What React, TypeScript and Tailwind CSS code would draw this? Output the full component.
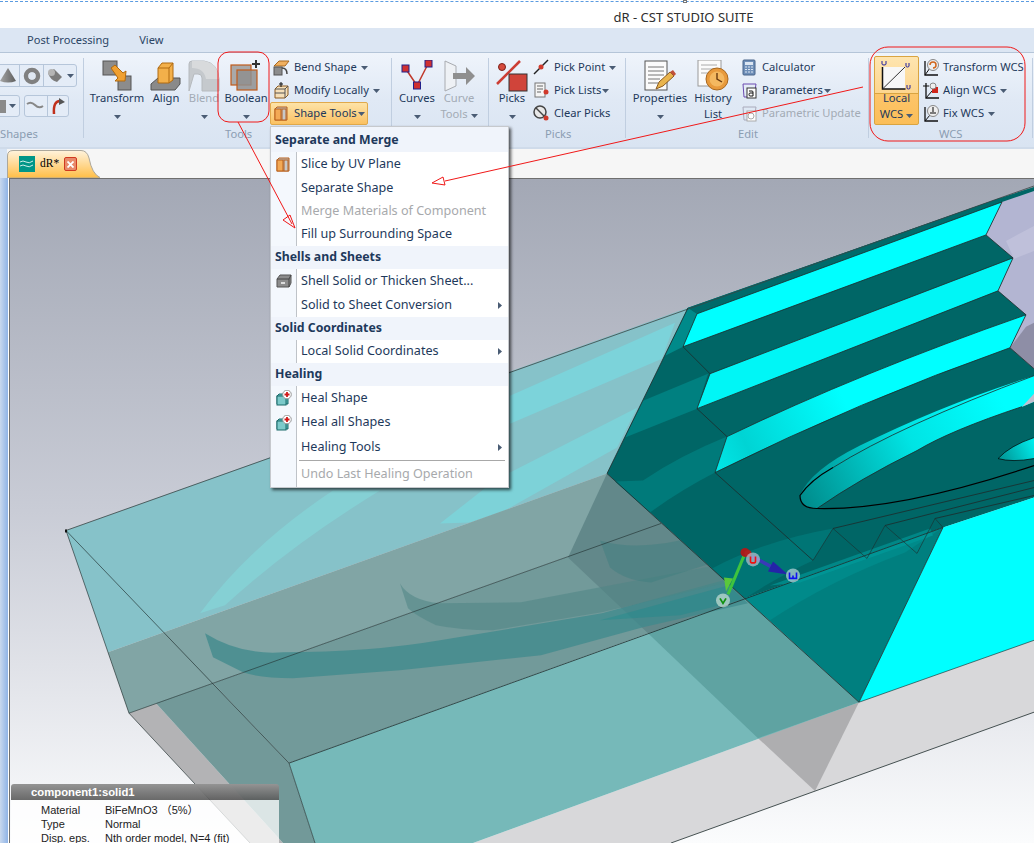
import type { ReactNode } from "react";

const uiFont = "font-['Noto_Sans',sans-serif]";

function Caret({ className = "" }: { className?: string }) {
  return (
    <svg width="7" height="4" viewBox="0 0 7 4" className={`shrink-0 ${className}`}>
      <path d="M0 0h7L3.5 4z" fill="#4a5c74" />
    </svg>
  );
}

function Ico({ children, size = 32 }: { children: ReactNode; size?: number }) {
  return (
    <svg width={size} height={size} viewBox={`0 0 ${size} ${size}`} className="shrink-0">
      {children}
    </svg>
  );
}

/* large ribbon icons */
const TransformIcon = () => (
  <Ico>
    <rect x="2" y="1" width="14" height="14" fill="#8c8c8c" stroke="#555" />
    <rect x="17" y="16" width="13" height="14" fill="#8c8c8c" stroke="#555" />
    <path d="M10 8l4-3 8 8 3-2-1 10-10 0 3-3-7-10z" fill="#f0a030" stroke="#b06a10" />
  </Ico>
);
const AlignIcon = () => (
  <Ico>
    <path d="M1 30v-6l7-6h22v6l-5 6z" fill="#8a8a8a" stroke="#555" />
    <path d="M8 8l4-5h11v17l-4 3H8z" fill="#f3b04a" stroke="#b06a10" />
    <path d="M8 8h11v15M19 8l4-5" fill="none" stroke="#b06a10" />
  </Ico>
);
const BlendIcon = () => (
  <Ico>
    <path d="M1 31V4q0-3 3-3h12q14 2 15 18v12H14V18q0-4-4-4H6z" fill="#c5c9cd" stroke="#b6babe" />
    <path d="M4 1h12q14 2 15 18H18Q16 8 4 8z" fill="#d8dadc" />
  </Ico>
);
const BooleanIcon = () => (
  <Ico>
    <rect x="1" y="5" width="20" height="20" fill="#a9a9a9" stroke="#c05a1a" strokeWidth="1.2" />
    <rect x="7" y="10" width="20" height="20" fill="#8f8f8f" fillOpacity="0.85" stroke="#c05a1a" strokeWidth="1.2" />
    <path d="M26 0v8M22 4h8" stroke="#333" strokeWidth="2" />
  </Ico>
);
const CurvesIcon = () => (
  <Ico>
    <path d="M4.500 8.500L16 25.500L27 4" fill="none" stroke="#c0392b" strokeWidth="1.5" />
    <rect x="1" y="5" width="7" height="7" fill="#d03030" stroke="#20208a" />
    <rect x="24" y="0" width="7" height="7" fill="#d03030" stroke="#20208a" />
    <rect x="12.500" y="22" width="7" height="7" fill="#d03030" stroke="#20208a" />
  </Ico>
);
const CurveToolsIcon = () => (
  <Ico>
    <path d="M2 1l11 5v20L2 31z" fill="#eef1f5" stroke="#a8abb0" />
    <path d="M10 13h13V7l9 9-9 9v-6H10z" fill="#8f8f8f" />
  </Ico>
);
const PicksIcon = () => (
  <Ico>
    <path d="M1 24L24 1" stroke="#cc3d33" strokeWidth="2.5" />
    <circle cx="6" cy="7" r="3.5" fill="#d64a3c" stroke="#7a2018" />
    <rect x="13" y="14" width="18" height="17" fill="#d0443a" stroke="#333" />
  </Ico>
);
const PropertiesIcon = () => (
  <Ico>
    <rect x="1" y="1" width="22" height="29" fill="#fbfbfb" stroke="#555" />
    <path d="M4 7h16M4 11h16M4 15h16M4 19h12M4 23h10" stroke="#777" />
    <path d="M12 29l3-7 11-10 4 4-11 10z" fill="#e9b44c" stroke="#8a5a20" />
    <path d="M26 12l4 4 2-2-3-4z" fill="#c0503a" />
  </Ico>
);
const HistoryIcon = () => (
  <Ico>
    <rect x="1" y="0" width="23" height="26" fill="#fbfbfb" stroke="#9a9a9a" />
    <path d="M4 5h16M4 9h16M4 13h8" stroke="#aaa" />
    <circle cx="20" cy="19" r="11" fill="#e89a3c" stroke="#a86820" />
    <circle cx="20" cy="19" r="7.5" fill="#f4b860" />
    <path d="M20 13v6l5 3" fill="none" stroke="#6a3a10" strokeWidth="1.4" />
  </Ico>
);
const WcsIcon = () => (
  <Ico>
    <rect x="1" y="7" width="23" height="22" fill="#f7f7f7" />
    <path d="M1.500 7v22h23" fill="none" stroke="#111" strokeWidth="1.5" />
    <path d="M1.500 29L24 7" stroke="#333" />
    <path d="M1 1v3q0 1 2 1t2-1V1M25 3v3q0 1 1.500 1t1.500-1V3M26 25v3q0 1 1.500 1t1.500-1v-3" fill="none" stroke="#2020a0" />
  </Ico>
);

/* small ribbon icons */
const BendIcon = () => (
  <Ico size={17}>
    <path d="M1 7l5-5h10l-4 5z" fill="#f0b060" stroke="#a86820" />
    <rect x="1" y="8" width="8" height="8" fill="#8c8c8c" stroke="#555" />
    <path d="M9 9q5 0 5 6" fill="none" stroke="#444" strokeWidth="1.500" />
  </Ico>
);
const ModifyIcon = () => (
  <Ico size={17}>
    <path d="M2 7l3-3h10v9l-3 3H2z" fill="#f5dfb8" stroke="#8a5a20" />
    <path d="M2 7h10v9M12 7l3-3M2 11h10" fill="none" stroke="#555" />
    <path d="M8 0v5M6 2h4" stroke="#111" />
  </Ico>
);
const SliceIcon = () => (
  <Ico size={17}>
    <path d="M2 4l2-2h10v13H2z" fill="#bdbdbd" stroke="#b9611c" />
    <rect x="2" y="4" width="6" height="11" fill="#f3a955" stroke="#b9611c" />
    <rect x="9" y="4" width="4" height="11" fill="#c8c8c8" stroke="#b9611c" />
  </Ico>
);
const PickPointIcon = () => (
  <Ico size={17}>
    <path d="M1 15L15 1" stroke="#222" strokeWidth="1.400" />
    <circle cx="8" cy="8" r="2.500" fill="#d0392b" />
  </Ico>
);
const PickListIcon = () => (
  <Ico size={17}>
    <rect x="2" y="1" width="10" height="14" fill="#f5f5f5" stroke="#777" />
    <path d="M4 4h6M4 7h6M4 10h4" stroke="#666" />
    <circle cx="13" cy="10" r="2.500" fill="#d0392b" />
  </Ico>
);
const ClearPicksIcon = () => (
  <Ico size={17}>
    <circle cx="7" cy="7" r="6" fill="#e8e8e8" stroke="#444" strokeWidth="1.500" />
    <path d="M3 3l8 8" stroke="#444" strokeWidth="1.500" />
    <circle cx="13" cy="13" r="2.500" fill="#d0392b" />
  </Ico>
);
const CalculatorIcon = () => (
  <Ico size={17}>
    <rect x="2" y="1" width="12" height="15" rx="1" fill="#6f8fb8" stroke="#49648a" />
    <rect x="4" y="3" width="8" height="3" fill="#dce6f2" />
    <path d="M4 8h8M4 10.500h8M4 13h8" stroke="#dce6f2" strokeDasharray="2 1" />
  </Ico>
);
const ParametersIcon = ({ muted = false }: { muted?: boolean }) => (
  <Ico size={17}>
    <path d="M2 2h13L13 15H3z" fill="none" stroke={muted ? "#aab" : "#6a4ab0"} />
    <rect x="6" y="6" width="9" height="10" fill="#fff" stroke={muted ? "#aaa" : "#333"} />
    {muted ? (
      <circle cx="10" cy="11" r="3" fill="none" stroke="#aaa" />
    ) : (
      <path d="M8 9h3q1 0 1 1v4H9q-1 0-1-1.500T9 11h3" fill="none" stroke="#111" />
    )}
  </Ico>
);
const TransformWcsIcon = () => (
  <Ico size={18}>
    <path d="M3 2v14h13" fill="none" stroke="#111" strokeWidth="1.300" />
    <path d="M3 16L8 9" stroke="#111" />
    <circle cx="11" cy="6" r="5.500" fill="#eee" stroke="#888" />
    <path d="M8 6a3 3 0 1 1 3 3" fill="none" stroke="#d0661c" strokeWidth="1.500" />
  </Ico>
);
const AlignWcsIcon = () => (
  <Ico size={18}>
    <path d="M4 1v15h13" fill="none" stroke="#111" strokeWidth="1.300" />
    <path d="M4 16L10 9M1 4h6" stroke="#111" />
    <rect x="10" y="5" width="6" height="6" fill="#d0261c" />
    <circle cx="11" cy="4" r="3" fill="#eee" stroke="#888" />
  </Ico>
);
const FixWcsIcon = () => (
  <Ico size={18}>
    <path d="M3 2v14h13" fill="none" stroke="#111" strokeWidth="1.300" />
    <path d="M3 16L8 10" stroke="#111" />
    <circle cx="11" cy="6" r="5.500" fill="#eee" stroke="#888" />
    <path d="M11 2v5M8 8h6" stroke="#555" strokeWidth="1.500" />
  </Ico>
);

function Separator() {
  return <div className="mt-[5px] h-[80px] w-px shrink-0 bg-[#c0cee0]" />;
}

function Group({ width, label, align = "text-center", children }: { width: string; label: string; align?: string; children: ReactNode }) {
  return (
    <div className={`flex shrink-0 flex-col overflow-hidden ${width}`}>
      <div className="flex h-[73px] shrink-0 pt-[3px]">{children}</div>
      <div className={`whitespace-nowrap text-[11.2px] leading-[16px] text-[#8b9db2] ${align}`}>{label}</div>
    </div>
  );
}

function LargeButton({ width, icon, lines, muted = false, caret = true, active = false }: { width: string; icon: ReactNode; lines: string[]; muted?: boolean; caret?: boolean; active?: boolean }) {
  return (
    <div
      className={`flex h-[69px] shrink-0 flex-col items-center text-[11.2px] leading-[16px] ${width} ${muted ? "text-[#a3abb5]" : "text-[#1e395b]"} ${active ? "rounded-[2px] border border-[#d9a441] bg-[linear-gradient(#fee5b0_0%,#fdd68f_53%,#d9a441_53%,#d9a441_54.5%,#fdc56a_55%,#fbbe58_100%)] pt-[3px]" : "pt-[4px]"}`}
    >
      <div className="flex h-[30px] items-start justify-center">{icon}</div>
      <div className="whitespace-nowrap">{lines[0]}</div>
      {lines[1] ? (
        <div className="flex items-center gap-[3px] whitespace-nowrap">
          {lines[1]}
          {caret && <Caret className="mt-[3px]" />}
        </div>
      ) : (
        caret && <Caret className="mt-[9px]" />
      )}
    </div>
  );
}

function SmallItem({ icon, text, caret, muted = false, active = false }: { icon: ReactNode; text: string; caret?: "gap" | "tight"; muted?: boolean; active?: boolean }) {
  return (
    <div
      className={`flex h-[23px] items-center gap-[4px] self-start whitespace-nowrap pr-[2px] text-[11.2px] ${muted ? "text-[#a3abb5]" : "text-[#1e395b]"} ${active ? "rounded-[2px] border border-[#e0a94c] bg-gradient-to-b from-[#fde3a7] to-[#fbc161] pl-[2px]" : "pl-[3px]"}`}
    >
      <span className="flex w-[17px] justify-center">{icon}</span>
      <span>{text}</span>
      {caret === "gap" && <Caret className="mt-[1px]" />}
      {caret === "tight" && <Caret className="-ml-[3px] mt-[1px]" />}
    </div>
  );
}

function MiniTool({ children, className = "" }: { children: ReactNode; className?: string }) {
  return <div className={`flex items-center rounded-[3px] border border-[#b6c6da] bg-[#e4ecf7] ${className}`}>{children}</div>;
}

function Ribbon() {
  return (
    <div className={`flex h-[97px] shrink-0 border-b-2 border-t border-b-[#cfdbea] border-t-[#b5c5d8] bg-gradient-to-b from-[#eff4fb] via-[#e0e9f5] to-[#d9e4f2] ${uiFont}`}>
      <Group width="w-[83px]" label="Shapes" align="text-left">
        <div className="flex flex-col gap-[8px] pt-[8px]">
          <MiniTool className="-ml-[3px] h-[23px] w-[80px] justify-around pr-[1px]">
            <svg width="18" height="17" viewBox="0 0 18 17">
              <defs>
                <linearGradient id="coneG" x1="0" x2="1" y1="0" y2="0">
                  <stop offset="0" stopColor="#a5a5a5" />
                  <stop offset="1" stopColor="#5e5e5e" />
                </linearGradient>
              </defs>
              <path d="M9 1l8 13q-8 3-16 0z" fill="url(#coneG)" />
            </svg>
            <span className="h-full w-px bg-[#b6c6da]" />
            <svg width="18" height="18" viewBox="0 0 18 18"><circle cx="9" cy="9" r="6" fill="none" stroke="#808080" strokeWidth="4.500" /><circle cx="9" cy="9" r="3.400" fill="#dfe7f2" /></svg>
            <span className="h-full w-px bg-[#b6c6da]" />
            <svg width="18" height="17" viewBox="0 0 18 17"><path d="M2 6l6-4 8 8-5 5q-7-2-9-9z" fill="#7c7c7c" /><ellipse cx="5.500" cy="5.500" rx="3.500" ry="3.500" fill="#b5b5b5" /></svg>
            <Caret />
          </MiniTool>
          <div className="flex gap-[4px]">
            <MiniTool className="-ml-[5px] h-[22px] w-[25px] justify-end gap-[3px] pr-[3px]">
              <span className="h-[13px] w-[11px] bg-[#8a8a8a]" />
              <Caret />
            </MiniTool>
            <MiniTool className="h-[22px] w-[45px] justify-around">
              <svg width="18" height="10" viewBox="0 0 18 10"><path d="M1 3q4-3 8 1t8 1" fill="none" stroke="#888" strokeWidth="2" /></svg>
              <span className="h-full w-px bg-[#b6c6da]" />
              <svg width="16" height="17" viewBox="0 0 16 17"><path d="M3 16q-1-13 6-13" fill="none" stroke="#c0301c" strokeWidth="2.500" /><path d="M8 0l6 4-6 3z" fill="#555" /></svg>
            </MiniTool>
          </div>
        </div>
      </Group>
      <Separator />
      <Group width="w-[307px]" label="Tools" align="text-left pl-[141px]">
        <div className="flex pl-[7px]">
          <LargeButton width="w-[52px]" icon={<TransformIcon />} lines={["Transform"]} />
          <div className="w-[6px]" />
          <LargeButton width="w-[34px]" icon={<AlignIcon />} lines={["Align"]} caret={false} />
          <div className="w-[4px]" />
          <LargeButton width="w-[34px]" icon={<BlendIcon />} lines={["Blend"]} muted />
          <div className="w-[4px]" />
          <LargeButton width="w-[42px]" icon={<BooleanIcon />} lines={["Boolean"]} />
          <div className="flex flex-col pl-[3px]">
            <SmallItem icon={<BendIcon />} text="Bend Shape" caret="gap" />
            <SmallItem icon={<ModifyIcon />} text="Modify Locally" caret="gap" />
            <SmallItem icon={<SliceIcon />} text="Shape Tools" caret="tight" active />
          </div>
        </div>
      </Group>
      <Separator />
      <Group width="w-[96px]" label="">
        <div className="flex pl-[6px]">
          <LargeButton width="w-[38px]" icon={<CurvesIcon />} lines={["Curves"]} />
          <div className="w-[4px]" />
          <LargeButton width="w-[38px]" icon={<CurveToolsIcon />} lines={["Curve", "Tools"]} muted />
        </div>
      </Group>
      <Separator />
      <Group width="w-[136px]" label="Picks" align="text-left pl-[56px]">
        <div className="flex pl-[6px]">
          <LargeButton width="w-[34px]" icon={<PicksIcon />} lines={["Picks"]} />
          <div className="flex flex-col pl-[1px]">
            <SmallItem icon={<PickPointIcon />} text="Pick Point" caret="gap" />
            <SmallItem icon={<PickListIcon />} text="Pick Lists" caret="tight" />
            <SmallItem icon={<ClearPicksIcon />} text="Clear Picks" />
          </div>
        </div>
      </Group>
      <Separator />
      <Group width="w-[242px]" label="Edit" align="text-left pl-[112px]">
        <div className="flex pl-[6px]">
          <LargeButton width="w-[56px]" icon={<PropertiesIcon />} lines={["Properties"]} />
          <LargeButton width="w-[50px]" icon={<HistoryIcon />} lines={["History", "List"]} caret={false} />
          <div className="flex flex-col">
            <SmallItem icon={<CalculatorIcon />} text="Calculator" />
            <SmallItem icon={<ParametersIcon />} text="Parameters" caret="tight" />
            <SmallItem icon={<ParametersIcon muted />} text="Parametric Update" muted />
          </div>
        </div>
      </Group>
      <Separator />
      <Group width="w-[163px]" label="WCS" align="text-left pl-[70px]">
        <div className="flex pl-[5px]">
          <LargeButton width="w-[45px]" icon={<WcsIcon />} lines={["Local", "WCS"]} active />
          <div className="flex flex-col">
            <SmallItem icon={<TransformWcsIcon />} text="Transform WCS" />
            <SmallItem icon={<AlignWcsIcon />} text="Align WCS" caret="gap" />
            <SmallItem icon={<FixWcsIcon />} text="Fix WCS" caret="gap" />
          </div>
        </div>
      </Group>
      <Separator />
    </div>
  );
}

function MenuHeader({ text, height }: { text: string; height: string }) {
  return <div className={`flex items-center bg-[#f0f4fb] pl-[4px] text-[12.3px] font-bold text-[#1e395b] ${height}`}>{text}</div>;
}

function MenuItem({ text, height, icon, muted = false, sub = false }: { text: string; height: string; icon?: ReactNode; muted?: boolean; sub?: boolean }) {
  return (
    <div className={`flex ${height}`}>
      <div className="flex w-[26px] shrink-0 items-center justify-center border-r border-[#bfc3c8] bg-[#f4f8fd]">{icon}</div>
      <div className={`flex flex-1 items-center justify-between pl-[4px] pr-[6px] text-[12.6px] ${muted ? "text-[#a7a9ac]" : "text-[#1e395b]"}`}>
        <span>{text}</span>
        {sub && <svg width="4" height="7" viewBox="0 0 4 7"><path d="M0 0l4 3.500L0 7z" fill="#4a5c74" /></svg>}
      </div>
    </div>
  );
}

const ShellIcon = () => (
  <Ico size={16}>
    <path d="M1 6l3-4h11v8l-2 4H1z" fill="#8c8c8c" stroke="#555" />
    <path d="M1 6h12v8M13 6l2-4" fill="none" stroke="#444" />
    <rect x="5" y="9" width="4" height="2" fill="#ddd" />
  </Ico>
);
const HealIcon = () => (
  <Ico size={16}>
    <path d="M1 6l2-2h9v10H1z" fill="#58b4b4" stroke="#1a6a6a" />
    <rect x="1" y="6" width="9" height="9" fill="#7ccaca" stroke="#1a6a6a" />
    <circle cx="11" cy="4.500" r="4.300" fill="#fff" stroke="#999" />
    <path d="M11 2v5M8.500 4.500h5" stroke="#d01818" strokeWidth="1.800" />
  </Ico>
);

function ShapeToolsMenu() {
  return (
    <div className={`absolute left-[270px] top-[126px] z-10 w-[239px] border border-[#c6c9cd] bg-white shadow-[2px_2px_3px_rgba(0,0,0,0.65)] ${uiFont}`}>
      <MenuHeader text="Separate and Merge" height="h-[25px] pt-[2px]" />
      <MenuItem text="Slice by UV Plane" height="h-[24px]" icon={<SliceIcon />} />
      <MenuItem text="Separate Shape" height="h-[24px]" />
      <MenuItem text="Merge Materials of Component" height="h-[23px]" muted />
      <MenuItem text="Fill up Surrounding Space" height="h-[23px]" />
      <MenuHeader text="Shells and Sheets" height="h-[23px]" />
      <MenuItem text="Shell Solid or Thicken Sheet..." height="h-[24px]" icon={<ShellIcon />} />
      <MenuItem text="Solid to Sheet Conversion" height="h-[24px]" sub />
      <MenuHeader text="Solid Coordinates" height="h-[23px]" />
      <MenuItem text="Local Solid Coordinates" height="h-[23px]" sub />
      <MenuHeader text="Healing" height="h-[23px]" />
      <MenuItem text="Heal Shape" height="h-[24px]" icon={<HealIcon />} />
      <MenuItem text="Heal all Shapes" height="h-[25px]" icon={<HealIcon />} />
      <MenuItem text="Healing Tools" height="h-[24px]" sub />
      <div className="flex h-[3px]">
        <div className="w-[26px] shrink-0 border-r border-[#bfc3c8] bg-[#f4f8fd]" />
        <div className="ml-[2px] mr-[3px] mt-px h-px flex-1 bg-[#a8a8a8]" />
      </div>
      <MenuItem text="Undo Last Healing Operation" height="h-[25px]" muted />
    </div>
  );
}

function P({ pts, fill, opacity }: { pts: string; fill: string; opacity?: number }) {
  return <polygon points={pts} fill={fill} opacity={opacity} />;
}

function Scene() {
  const edge = "#1d2b2b";
  return (
    <svg viewBox="10 178 1024 665" className="block h-full w-full" preserveAspectRatio="none">
      <defs>
        <linearGradient id="cy1" x1="800" y1="495" x2="1000" y2="395" gradientUnits="userSpaceOnUse">
          <stop offset="0" stopColor="#008c8c" />
          <stop offset="0.55" stopColor="#00e4e4" />
          <stop offset="1" stopColor="#00ffff" />
        </linearGradient>
        <linearGradient id="cy3" x1="715" y1="470" x2="1010" y2="330" gradientUnits="userSpaceOnUse">
          <stop offset="0" stopColor="#00e8e8" />
          <stop offset="0.12" stopColor="#00d4d4" />
          <stop offset="0.45" stopColor="#00ffff" />
        </linearGradient>
        <linearGradient id="cy5" x1="998" y1="458" x2="1034" y2="440" gradientUnits="userSpaceOnUse">
          <stop offset="0" stopColor="#009090" />
          <stop offset="1" stopColor="#00eeee" />
        </linearGradient>
      </defs>

      {/* grey substrate */}
      <P pts="859,702 1034,640 1034,712 671,843 473,843" fill="#d8d8da" />
      <P pts="859,702 815,791 758,738" fill="#aeaeb0" />
      <P pts="108,652 156,703 129,713" fill="#d3d3d6" />
      <P pts="129,713 156,703 283,843 250,843" fill="#b3b3b5" />

      {/* translucent top face */}
      <P pts="66,530 688,307 607,473 108,652" fill="#86c2c9" />
      <P pts="510,395 675,322 662,358 510,423" fill="#7cd3da" />
      <P pts="510,472 637,407 617,447 505,510 470,522 440,523 505,472" fill="#7dd2d8" />
      <path d="M200 613 Q 250 545 333 490 L 380 490 Q 290 545 225 605 Z" fill="#85d0d4" />

      {/* grey-teal middle and its lower parts */}
      <P pts="108,652 607,473 661,523 129,713" fill="#81a5a5" />
      <P pts="156,703 213,683 289,763 315,843 283,843" fill="#729999" />
      <P pts="213,683 661,523 745,598 289,763" fill="#729a9a" />
      <P pts="289,763 745,598 859,702 473,843 315,843" fill="#76b9b9" />
      <P pts="648,633 745,598 859,702 758,738" fill="#5fa3a2" />
      <P pts="607,473 568,557 648,633 745,598" fill="#62888a" />

      {/* arcs seen through the body */}
      <path d="M205 633 Q 240 655 283 652 Q 370 652 440 640 L 602 613 L 723 580 L 748 603 L 643 627 L 541 655 L 400 670 L 293 678 Q 260 678 243 672 L 213 657 Z" fill="#3f8a8c" opacity="0.75" />
      <path d="M400 583 Q 410 600 440 603 L 521 602 L 715 565 L 735 580 L 602 612 L 493 630 Q 460 630 436 625 Q 415 615 408 608 Z" fill="#4f8585" opacity="0.55" />
      <path d="M600 540 L 610 567 Q 625 580 651 582 L 720 560 L 700 535 Q 640 552 600 540 Z" fill="#3f7f7f" opacity="0.45" />
      <path d="M600 620 L 820 560 L 930 525 L 930 535 L 800 585 L 680 615 Z" fill="#008b8b" opacity="0.25" />

      {/* solid dark body */}
      <P pts="688,307 1000,197 1034,186 1034,497 943,527 745,598 607,473" fill="#006666" />
      <P pts="745,598 859,702 943,527" fill="#007f7f" />
      <path d="M745 598 L 943 527 L 905 552 Q 830 580 770 620 Z" fill="#008a8a" />
      <path d="M770 585 L 930 528 L 933 535 L 800 582 Z" fill="#009c9c" opacity="0.6" />
      <P pts="688,307 697,313 683,346 665,355" fill="#008a8a" />
      <P pts="643,400 708,373 697,408 625,437" fill="#008080" />
      <path d="M727 436 Q 680 455 643 480 L 615 481 L 650 512 Q 680 490 715 472 Z" fill="#007a7a" />
      <path d="M712 568 Q 765 540 833 528 L 813 560 Q 780 575 745 598 Z" fill="#007575" />

      {/* steps */}
      <P pts="688,307 1000,197 1002,201 697,313" fill="#006a6a" />
      <P pts="697,313 1002,201 986,234 683,346" fill="#00ffff" />
      <P pts="710,373 1013,257 998,290 697,408" fill="#00f6f6" />
      <path d="M727 436 Q 860 372 1026 314 L 1010 347 Q 860 400 715 472 Z" fill="url(#cy3)" />
      <path d="M800 495 Q 810 470 860 445 Q 940 405 1034 375 L 1034 401 L 1022 406 Q 950 430 917 450 Q 860 478 817 508 Q 800 508 800 495 Z" fill="url(#cy1)" />
      <path d="M998 458 Q 1010 445 1034 437 L 1034 458 Q 1012 462 998 458 Z" fill="url(#cy5)" />

      {/* lavender back side of the steps */}
      <P pts="1002,201 1034,190 1034,368 1010,347 1026,314 998,290 1013,257 986,234" fill="#b3b5d2" />
      <P pts="1006,240 1034,225 1034,250 1014,258" fill="#bfc0da" />
      <P pts="1010,347 1026,326 1034,322 1034,368" fill="#8e8ea6" />
      <P pts="1022,406 1034,393 1034,401" fill="#c0c0d0" />

      {/* front cyan face */}
      <P pts="859,702 943,527 1034,497 1034,640" fill="#00ffff" />

      {/* edges */}
      <g fill="none" stroke={edge} strokeWidth="0.8">
        <path d="M66 530L1000 197M1000 197L1034 185" stroke="#3a4444" />
        <path d="M66 530L129 713L250 843" strokeOpacity="0.8" />
        <path d="M66 530L289 763L315 843" strokeOpacity="0.8" />
        <path d="M129 713L661 523" strokeOpacity="0.75" />
        <path d="M289 763L943 527" />
        <path d="M671 843L1034 712" />
        <path d="M859 702L1034 640" strokeOpacity="0.8" />
        <path d="M688 307L607 473L859 702L943 527" />
        <path d="M697 313L1002 201L986 234L683 346L697 313M683 346L710 373L697 408L727 436L715 472L813 560" />
        <path d="M986 234L1013 257L998 290L1026 314L1010 347L1034 368" />
        <path d="M710 373L1013 257M697 408L998 290M727 436Q860 372 1026 314M715 472Q860 400 1010 347" />
        <path d="M813 560L833 528L867 558L885 525L917 553L935 518L943 527" strokeWidth="0.6" />
        <path d="M833 528L1034 480M885 525L1034 487M935 518L1034 495" strokeWidth="0.8" />
        <path d="M833 467Q900 425 1034 375M817 508Q860 478 917 450Q950 430 1022 406" />
      </g>
      <path d="M833 467Q810 480 800 495Q800 508 817 508Q900 510 1034 465" fill="none" stroke="#000" strokeWidth="1.200" />
      <path d="M998 458Q1010 445 1034 437M998 458Q1012 462 1034 458" fill="none" stroke="#000" strokeWidth="0.7" />
      <rect x="65" y="529" width="2" height="3" fill="#111" />

      {/* local wcs triad */}
      <path d="M745 553L728 594" stroke="#3ec43e" strokeWidth="3" />
      <path d="M733 578L726 591L724 577z" fill="#5ac83a" />
      <path d="M752 556L782 572" stroke="#3a3ab8" strokeWidth="3.500" />
      <path d="M773 561L788 574L768 571z" fill="#2424a8" />
      <circle cx="745" cy="552" r="4.500" fill="#a81c1c" />
      <circle cx="748" cy="553" r="3.500" fill="#b02020" />
      <circle cx="753" cy="559" r="7" fill="#c8c8d8" opacity="0.65" />
      <circle cx="793" cy="575" r="7" fill="#b0d0d8" opacity="0.75" />
      <circle cx="723" cy="600" r="7" fill="#c0dcd0" opacity="0.75" />
      <path d="M750.500 556v5q0 1.500 2.500 1.500t2.500-1.500v-5" fill="none" stroke="#f01010" strokeWidth="1.600" />
      <path d="M789.500 572v6h7v-6M793 575v3" fill="none" stroke="#1010f0" strokeWidth="1.600" />
      <path d="M720 598l3 5 3-5" fill="none" stroke="#109010" strokeWidth="1.800" />
    </svg>
  );
}

function SolidInfo() {
  const rows = [
    ["Material", "BiFeMnO3 （5%）"],
    ["Type", "Normal"],
    ["Disp. eps.", "Nth order model, N=4 (fit)"],
  ];
  return (
    <div className="absolute bottom-0 left-[1px] h-[59px] w-[268px] overflow-hidden font-['Liberation_Sans',sans-serif] text-[11px]">
      <div className="h-[16px] rounded-t-[3px] bg-gradient-to-b from-[#949494] to-[#5a5a5a]/90 pl-[20px] text-[11.3px] font-bold leading-[16px] text-white">
        component1:solid1
      </div>
      <div className="h-[43px] bg-white/75 pl-[30px] pt-[3px] text-[#222]">
        {rows.map(([k, v]) => (
          <div key={k} className="flex h-[14px] leading-[14px]">
            <span className="w-[64px]">{k}</span>
            <span className="font-['Liberation_Sans','Noto_Sans_CJK_SC',sans-serif]">{v}</span>
          </div>
        ))}
      </div>
    </div>
  );
}

function Annotations() {
  return (
    <svg className="pointer-events-none absolute left-0 top-0 z-20" width="1034" height="843" viewBox="0 0 1034 843" fill="none" stroke="#f01818" strokeWidth="1">
      <rect x="218" y="52" width="51" height="70" rx="11" />
      <rect x="870" y="47" width="155" height="94" rx="18" />
      <path d="M238 122L292 224" />
      <path d="M295 228L283 220L290 215Z" />
      <path d="M863 87L445 181" />
      <path d="M432 183L443 177L445 185Z" />
    </svg>
  );
}

function DocTab() {
  return (
    <div className="relative mt-[1px] flex h-[28px] w-[93px] shrink-0 items-center pl-[12px]">
      <svg className="absolute inset-0" width="93" height="28" viewBox="0 0 93 28">
        <defs>
          <linearGradient id="tabG" x1="0" x2="0" y1="0" y2="1">
            <stop offset="0" stopColor="#fff3dc" />
            <stop offset="0.55" stopColor="#ffd68c" />
            <stop offset="1" stopColor="#ffbe45" />
          </linearGradient>
        </defs>
        <path d="M0.500 28V6Q0.500 0.500 6 0.500H74Q80 0.500 82 8Q85 24 93 27.500V28Z" fill="url(#tabG)" stroke="#aca79b" />
      </svg>
      <div className="relative flex h-[16px] w-[16px] items-center justify-center bg-[#009688]">
        <svg width="14" height="10" viewBox="0 0 14 10"><path d="M0 3q3-2 6 0t7-1M0 7q3-2 6 0t7-1" fill="none" stroke="#cfeee8" /></svg>
      </div>
      <span className="relative ml-[5px] font-['Liberation_Serif',serif] text-[11.5px] text-black">dR*</span>
      <div className="relative ml-[5px] flex h-[14px] w-[13px] items-center justify-center rounded-[2px] border border-[#d03a20] bg-[#e88a6a]">
        <svg width="7" height="7" viewBox="0 0 7 7"><path d="M0.500 0.500l6 6M6.500 0.500l-6 6" stroke="#fff" strokeWidth="1.800" /></svg>
      </div>
    </div>
  );
}

export default function App() {
  return (
    <div className="relative flex h-[843px] w-[1034px] flex-col overflow-hidden bg-white">
      <div className={`relative h-[28px] shrink-0 bg-white text-center text-[13px] leading-[34px] text-[#2e2e2e] ${uiFont}`}>
        <div className="absolute left-0 right-0 top-px border-t border-dashed border-[#5b9be0]" />
        <div className="absolute left-[683px] top-0 h-[3px] w-[4px] border border-[#777] bg-white" />
        <span className="ml-[333px]">dR - CST STUDIO SUITE</span>
      </div>
      <div className={`flex h-[24px] shrink-0 items-center bg-[#dce6f3] pl-[27px] text-[11.1px] text-[#2b4565] ${uiFont}`}>
        <span>Post Processing</span>
        <span className="ml-[30px]">View</span>
      </div>
      <Ribbon />
      <div className="flex h-[29px] shrink-0 bg-[#f6f6f6]">
        <div className="h-full w-[7px] bg-[#d6e3f3]" />
        <DocTab />
      </div>
      <div className="flex min-h-0 flex-1">
        <div className="w-[8px] shrink-0 bg-gradient-to-r from-[#c8d8ee] to-[#8fb3e6]" />
        <div className="w-px shrink-0 bg-white" />
        <div className="relative flex-1 border-l border-t border-[#6f6f6f] bg-gradient-to-b from-[#a3a8b5] via-[#c9ccd6] to-[#fbfcfd]">
          <Scene />
          <SolidInfo />
        </div>
      </div>
      <ShapeToolsMenu />
      <Annotations />
    </div>
  );
}
